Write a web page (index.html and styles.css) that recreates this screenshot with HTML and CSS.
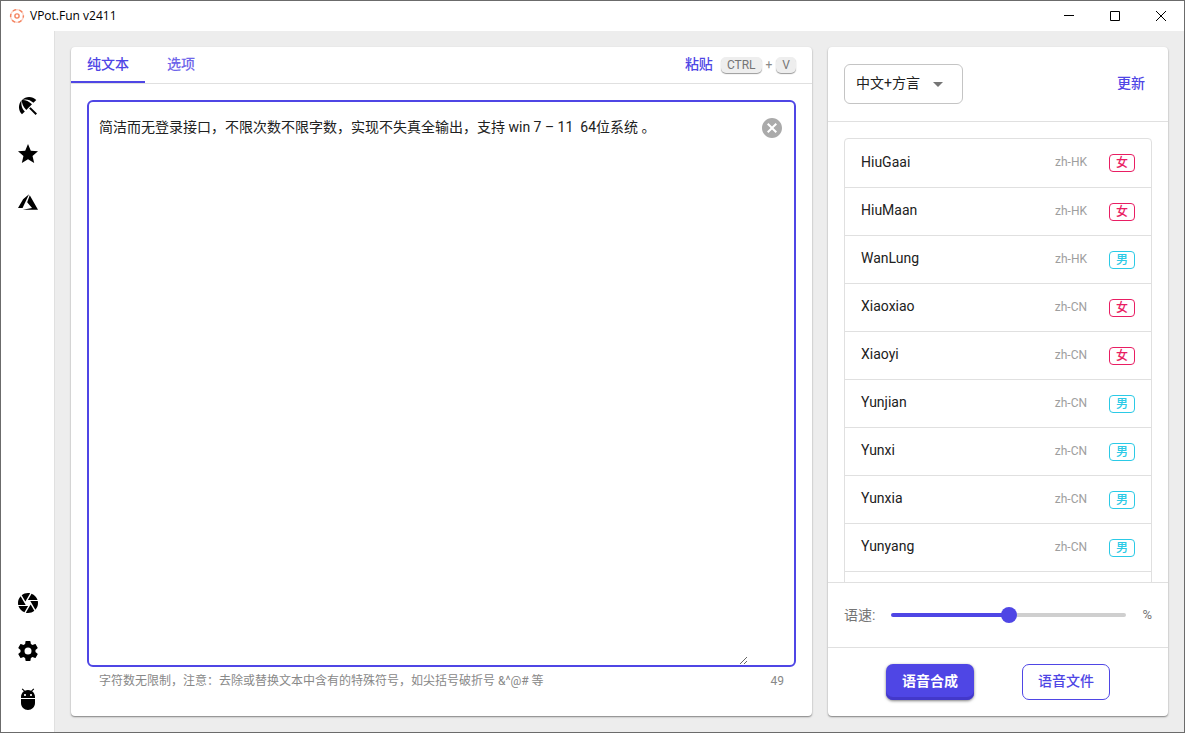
FILE: index.html
```
<!DOCTYPE html>
<html lang="zh-CN">
<head>
<meta charset="utf-8">
<title>VPot.Fun v2411</title>
<link rel="stylesheet" href="styles.css">
</head>
<body>
<div class="window">
  <header class="titlebar">
    <svg class="logo" viewBox="0 0 16 16" aria-hidden="true">
      <circle cx="8" cy="8" r="6.4" fill="none" stroke="#fbd0c3" stroke-width="1.3"/>
      <circle cx="8" cy="8" r="6.4" fill="none" stroke="#f4835f" stroke-width="1.4" stroke-dasharray="3.4 3.3" stroke-dashoffset="1.7"/>
      <circle cx="8" cy="8" r="2.1" fill="none" stroke="#f4835f" stroke-width="1.4"/>
    </svg>
    <h1 class="title">VPot.Fun v2411</h1>
    <div class="window-controls">
      <button class="wc" type="button" aria-label="最小化"><svg viewBox="0 0 10 10"><path d="M0 4.5h10"/></svg></button>
      <button class="wc" type="button" aria-label="最大化"><svg viewBox="0 0 10 10"><path d="M.5.5h9v9h-9z"/></svg></button>
      <button class="wc" type="button" aria-label="关闭"><svg viewBox="0 0 10 10"><path d="M0 0l10 10M10 0L0 10"/></svg></button>
    </div>
  </header>
  <div class="content">
    <nav class="sidebar">
      <div class="nav-group">
        <button class="nav-btn" type="button" aria-label="首页"><svg viewBox="0 0 24 24"><path d="M13.127 14.56l1.43-1.43 6.44 6.443L19.57 21zM17.42 8.83l2.86-2.86c-3.95-3.95-10.35-3.96-14.3-.02 3.93-1.3 8.31-.25 11.44 2.88zM5.95 5.98c-3.94 3.95-3.93 10.35.02 14.3l2.86-2.86C5.7 14.29 4.65 9.91 5.95 5.98zM5.97 5.96l-.01.01c-.38 3.01 1.17 6.88 4.3 10.02l5.73-5.73c-3.13-3.13-7.01-4.68-10.02-4.3z"/></svg></button>
        <button class="nav-btn" type="button" aria-label="收藏"><svg viewBox="0 0 24 24"><path d="M12 17.27L18.18 21l-1.64-7.03L22 9.24l-7.19-.61L12 2 9.19 8.63 2 9.24l5.46 4.73L5.82 21z"/></svg></button>
        <button class="nav-btn" type="button" aria-label="Azure"><svg viewBox="0 0 24 24"><path d="M13.05 4.24L6.56 18.05 2 18l5.09-8.76zM13.75 5.33L22 19.76H6.74l9.3-1.66-4.87-5.79z"/></svg></button>
      </div>
      <div class="nav-group">
        <button class="nav-btn" type="button" aria-label="相机"><svg viewBox="0 0 24 24"><path d="M9.4 10.5l4.77-8.26C13.47 2.09 12.75 2 12 2c-2.4 0-4.6.85-6.32 2.25l3.66 6.35.06-.1zM21.54 9c-.92-2.92-3.15-5.26-6-6.34L11.88 9h9.66zm.26 1h-7.49l.29.5 4.76 8.25C21 16.97 22 14.61 22 12c0-.69-.07-1.35-.2-2zM8.54 12l-3.9-6.75C3.01 7.03 2 9.39 2 12c0 .69.07 1.35.2 2h7.49l-1.15-2zm-6.08 3c.92 2.92 3.15 5.26 6 6.34L12.12 15H2.46zm11.27 0l-3.9 6.76c.7.15 1.42.24 2.17.24 2.4 0 4.6-.85 6.32-2.25l-3.66-6.35-.93 1.6z"/></svg></button>
        <button class="nav-btn" type="button" aria-label="设置"><svg viewBox="0 0 24 24"><path d="M12 15.5A3.5 3.5 0 0 1 8.5 12 3.5 3.5 0 0 1 12 8.5a3.5 3.5 0 0 1 3.5 3.5 3.5 3.5 0 0 1-3.5 3.5m7.43-2.53c.04-.32.07-.64.07-.97s-.03-.66-.07-1l2.11-1.63c.19-.15.24-.42.12-.64l-2-3.46c-.12-.22-.39-.31-.61-.22l-2.49 1c-.52-.39-1.06-.73-1.69-.98l-.37-2.65A.506.506 0 0 0 14 2h-4c-.25 0-.46.18-.5.42l-.37 2.65c-.63.25-1.17.59-1.69.98l-2.49-1c-.22-.09-.49 0-.61.22l-2 3.46c-.13.22-.07.49.12.64L4.57 11c-.04.34-.07.67-.07 1s.03.65.07.97l-2.11 1.66c-.19.15-.25.42-.12.64l2 3.46c.12.22.39.3.61.22l2.49-1.01c.52.4 1.06.74 1.69.99l.37 2.65c.04.24.25.42.5.42h4c.25 0 .46-.18.5-.42l.37-2.65c.63-.26 1.17-.59 1.69-.99l2.49 1.01c.22.08.49 0 .61-.22l2-3.46c.12-.22.07-.49-.12-.64z"/></svg></button>
        <button class="nav-btn" type="button" aria-label="调试"><svg viewBox="0 0 24 24"><path d="M5 16c0 3.87 3.13 7 7 7s7-3.13 7-7v-4H5v4zM16.12 4.37l2.1-2.1-.82-.83-2.3 2.31C14.16 3.28 13.12 3 12 3s-2.16.28-3.09.75L6.6 1.44l-.82.83 2.1 2.1C6.14 5.64 5 7.68 5 10v1h14v-1c0-2.32-1.14-4.36-2.88-5.63zM9 9c-.55 0-1-.45-1-1s.45-1 1-1 1 .45 1 1-.45 1-1 1zm6 0c-.55 0-1-.45-1-1s.45-1 1-1 1 .45 1 1-.45 1-1 1z"/></svg></button>
      </div>
    </nav>
    <main class="main">
      <section class="panel editor">
        <div class="toolbar">
          <button class="tab tab-active" type="button">纯文本</button>
          <button class="tab" type="button">选项</button>
          <div class="paste">
            <button class="text-btn" type="button">粘贴</button>
            <span class="keys"><kbd class="key">CTRL</kbd>+<kbd class="key">V</kbd></span>
          </div>
        </div>
        <div class="editor-body">
          <div class="field">
            <textarea class="field-text" id="text" aria-label="文本" aria-describedby="hint">简洁而无登录接口，不限次数不限字数，实现不失真全输出，支持 win 7 – 11  64位系统 。</textarea>
            <button class="clear" type="button" aria-label="清除"><svg viewBox="0 0 24 24"><path d="M12 2C6.47 2 2 6.47 2 12s4.47 10 10 10 10-4.47 10-10S17.53 2 12 2zm5 13.59L15.59 17 12 13.41 8.41 17 7 15.59 10.59 12 7 8.41 8.41 7 12 10.59 15.59 7 17 8.41 13.41 12 17 15.59z"/></svg></button>
          </div>
          <div class="hint"><span id="hint">字符数无限制，注意：去除或替换文本中含有的特殊符号，如尖括号破折号 &amp;^@# 等</span><span>49</span></div>
        </div>
      </section>
      <section class="panel voices">
        <div class="voices-head">
          <div class="select-box">
            <select class="select" aria-label="语言"><option>中文+方言</option></select>
            <svg class="caret" viewBox="0 0 10 5" aria-hidden="true"><path d="M0 0h10L5 5z"/></svg>
          </div>
          <button class="text-btn" type="button">更新</button>
        </div>
        <div class="voices-body">
          <ul class="list">
            <li class="voice"><span class="name">HiuGaai</span><span class="locale">zh-HK</span><span class="badge female">女</span></li>
            <li class="voice"><span class="name">HiuMaan</span><span class="locale">zh-HK</span><span class="badge female">女</span></li>
            <li class="voice"><span class="name">WanLung</span><span class="locale">zh-HK</span><span class="badge male">男</span></li>
            <li class="voice"><span class="name">Xiaoxiao</span><span class="locale">zh-CN</span><span class="badge female">女</span></li>
            <li class="voice"><span class="name">Xiaoyi</span><span class="locale">zh-CN</span><span class="badge female">女</span></li>
            <li class="voice"><span class="name">Yunjian</span><span class="locale">zh-CN</span><span class="badge male">男</span></li>
            <li class="voice"><span class="name">Yunxi</span><span class="locale">zh-CN</span><span class="badge male">男</span></li>
            <li class="voice"><span class="name">Yunxia</span><span class="locale">zh-CN</span><span class="badge male">男</span></li>
            <li class="voice"><span class="name">Yunyang</span><span class="locale">zh-CN</span><span class="badge male">男</span></li>
            <li class="voice"></li>
          </ul>
        </div>
        <div class="speed">
          <label for="speed">语速:</label>
          <input class="slider" id="speed" type="range" min="-100" max="100" value="0">
          <span class="unit">%</span>
        </div>
        <div class="actions">
          <button class="btn btn-primary" type="button">语音合成</button>
          <button class="btn btn-outline" type="button">语音文件</button>
        </div>
      </section>
    </main>
  </div>
</div>
</body>
</html>
```
FILE: styles.css
```
* { box-sizing: border-box; }

body {
  margin: 0;
  font: 14px/20px Roboto, "Noto Sans CJK SC", sans-serif;
  color: #212121;
}

button, select, textarea, input { font: inherit; color: inherit; margin: 0; }
button { border: 0; padding: 0; background: none; cursor: pointer; }
svg { display: block; }

.window {
  height: 100vh;
  display: flex;
  flex-direction: column;
  border: 1px solid #6b6b6b;
  background: #fff;
}

.titlebar {
  display: flex;
  align-items: center;
  flex: none;
  height: 30px;
  padding-left: 8px;
  gap: 5px;
}
.logo { width: 16px; height: 16px; }
.title {
  flex: 1;
  margin: 0;
  font: 400 12px/16px "Open Sans", sans-serif;
  color: #000;
}
.window-controls { display: flex; }
.wc { display: grid; place-items: center; width: 46px; height: 28px; }
.wc svg { width: 10px; height: 10px; fill: none; stroke: #000; stroke-width: 1; overflow: visible; }

.content { display: flex; flex: 1; min-height: 0; }

.sidebar {
  display: flex;
  flex-direction: column;
  justify-content: space-between;
  flex: none;
  width: 54px;
  padding: 51px 0 9px;
  border-right: 1px solid #e0e0e0;
}
.nav-group { display: flex; flex-direction: column; }
.nav-btn { display: grid; place-items: center; height: 48px; }
.nav-btn svg { width: 24px; height: 24px; fill: #000; }

.main {
  display: flex;
  flex: 1;
  min-width: 0;
  gap: 16px;
  padding: 16px;
  background: #ededed;
}

.panel {
  display: flex;
  flex-direction: column;
  min-height: 0;
  background: #fff;
  border-radius: 4px;
  box-shadow: 0 1px 2px rgba(0, 0, 0, .35), 0 1px 1px rgba(0, 0, 0, .15);
}
.editor { flex: 1; min-width: 0; }
.voices { flex: none; width: 340px; }

.toolbar { display: flex; height: 37px; border-bottom: 1px solid #e0e0e0; }
.tab {
  min-width: 72px;
  padding: 0 16px;
  border-bottom: 2px solid transparent;
  font-weight: 500;
  color: #6f66ea;
}
.tab-active { min-width: 74px; border-bottom-color: #4f46e5; color: #4f46e5; }
.paste { display: flex; align-items: center; gap: 8px; margin-left: auto; padding-right: 16px; }
.text-btn { padding-bottom: 2px; font-weight: 500; color: #4f46e5; }
.keys { display: flex; align-items: center; gap: 4px; font-size: 12px; color: #8a8a8a; }
.key {
  padding: 0 6px;
  border-radius: 5px;
  background: #eee;
  box-shadow: 0 1px 1px rgba(0, 0, 0, .4);
  font: 12px/16px Roboto, sans-serif;
  color: #757575;
}

.editor-body { display: flex; flex-direction: column; flex: 1; min-height: 0; padding: 16px; }
.field {
  display: flex;
  align-items: flex-start;
  flex: 1;
  min-height: 0;
  border: 2px solid #4f46e5;
  border-radius: 6px;
}
.field-text {
  flex: 1;
  min-width: 0;
  height: 100%;
  padding: 13px 10px;
  border: 0;
  outline: 0;
  background: none;
  line-height: 24px;
  resize: both;
}
.clear { margin: 14px 10px 0 12px; }
.clear svg { width: 24px; height: 24px; fill: #aaa; }
.hint {
  display: flex;
  justify-content: space-between;
  height: 33px;
  padding: 4px 12px;
  font-size: 12px;
  color: #888;
}

.voices-head {
  display: flex;
  align-items: center;
  justify-content: space-between;
  flex: none;
  height: 75px;
  padding: 0 23px 0 16px;
  border-bottom: 1px solid #e0e0e0;
}
.select-box { display: grid; align-items: center; width: 119px; }
.select, .caret { grid-area: 1 / 1; }
.select {
  appearance: none;
  height: 40px;
  padding: 0 11px 2px;
  border: 1px solid #c4c4c4;
  border-radius: 6px;
  background: none;
}
.caret { justify-self: end; width: 10px; height: 5px; margin-right: 20px; fill: #757575; pointer-events: none; }

.voices-body { flex: 1; min-height: 0; padding: 16px 16px 0; overflow: hidden; }
.list {
  margin: 0;
  padding: 0;
  border: 1px solid #e0e0e0;
  border-radius: 4px;
  list-style: none;
}
.voice {
  display: flex;
  align-items: center;
  height: 48px;
  padding: 0 16px;
  border-bottom: 1px solid #e0e0e0;
}
.voice:first-child { height: 49px; }
.name { flex: 1; padding-bottom: 3px; }
.locale { margin-right: 22px; padding-bottom: 2px; font-size: 12px; color: #9e9e9e; }
.badge {
  width: 26px;
  border: 1px solid;
  border-radius: 4px;
  font-size: 12px;
  font-weight: 500;
  line-height: 16px;
  text-align: center;
}
.female { color: #e91e63; }
.male { color: #2bcae6; }

.speed {
  display: flex;
  align-items: center;
  gap: 16px;
  flex: none;
  height: 65px;
  padding: 0 16px;
  border-top: 1px solid #e0e0e0;
  color: #757575;
}
.unit { font-size: 13px; }
.slider { appearance: none; flex: 1; min-width: 0; height: 16px; background: none; }
.slider::-webkit-slider-runnable-track {
  height: 4px;
  border-radius: 2px;
  background: linear-gradient(to right, #4f46e5 50%, #cfcfcf 50%);
}
.slider::-webkit-slider-thumb {
  appearance: none;
  width: 16px;
  height: 16px;
  margin-top: -6px;
  border-radius: 50%;
  background: #4f46e5;
}

.actions {
  display: flex;
  justify-content: center;
  gap: 48px;
  flex: none;
  padding: 16px;
  border-top: 1px solid #e0e0e0;
}
.btn { width: 88px; height: 36px; padding-bottom: 2px; border-radius: 7px; font-weight: 500; }
.btn-primary {
  background: #4f46e5;
  color: #fff;
  font-weight: 700;
  box-shadow: inset 0 -3px 0 #4338ca, 0 1px 3px rgba(0, 0, 0, .5);
}
.btn-outline { border: 1px solid #4f46e5; color: #4f46e5; }
```
